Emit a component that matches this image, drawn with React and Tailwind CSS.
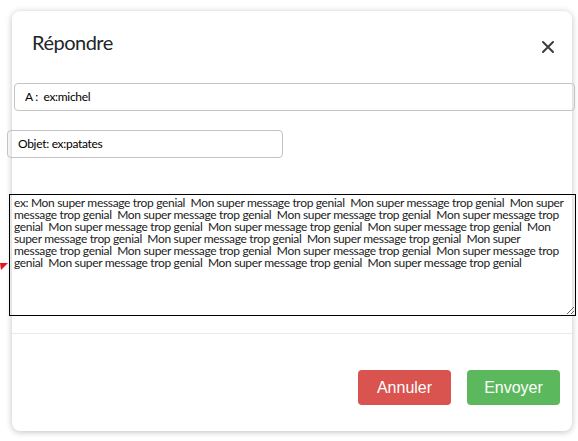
import React from "react";

const MESSAGE =
  "ex: Mon super message trop genial " +
  Array(19).fill(" Mon super message trop genial ").join("").trimEnd();

export default function App() {
  return (
    <div className="min-h-[441px] w-[578px] bg-white pl-[12px] pt-[11px] relative font-['Lato',sans-serif]">
      <div className="w-[560px] h-[420px] rounded-lg bg-white shadow-[0_1px_6px_rgba(0,0,0,0.25)] flex flex-col">
        <div className="h-[61px] flex items-center justify-between pl-[20px] pr-[17px]">
          <h2 className="text-[20px] text-[#212529] leading-none tracking-[-0.5px]">Répondre</h2>
          <svg width="14" height="14" viewBox="0 0 14 14" className="mt-[11px]">
            <path d="M2 2 L12 12 M12 2 L2 12" stroke="#3d3d3d" strokeWidth="2" strokeLinecap="round" />
          </svg>
        </div>

        <div className="pt-[11px] flex flex-col">
          <div className="ml-[2px] w-[561px] h-[28px] border border-[#c4c4c4] rounded flex items-center pl-[10px] text-[12px] tracking-[-0.3px] text-black">
            A :&nbsp; ex:michel
          </div>
          <div className="ml-[-5px] mt-[19px] w-[276px] h-[28px] border border-[#c4c4c4] rounded flex items-center pl-[10px] text-[12px] tracking-[-0.3px] text-black">
            Objet: ex:patates
          </div>
          <textarea
            className="ml-[-3px] mt-[36px] w-[567px] h-[122px] border border-black pl-[4px] pr-[10px] pt-[2px] text-[12px] leading-[12px] tracking-[-0.33px] text-[#222] outline-none font-['Lato',sans-serif]"
            defaultValue={MESSAGE}
          />
        </div>

        <div className="mt-[17px] border-t border-[#e9e9e9] flex-1 flex justify-end items-start pt-[36px] pr-[12px] gap-[16px] font-['Liberation_Sans',sans-serif]">
          <button className="w-[93px] h-[35px] rounded bg-[#d9534f] text-white text-[16px]">Annuler</button>
          <button className="w-[93px] h-[35px] rounded bg-[#5cb85c] text-white text-[16px]">Envoyer</button>
        </div>
      </div>

      <svg width="9" height="8" viewBox="0 0 9 8" className="absolute left-0 top-[263px]">
        <polygon points="0,0 8,0 1,7" fill="#e8141e" />
      </svg>
    </div>
  );
}
